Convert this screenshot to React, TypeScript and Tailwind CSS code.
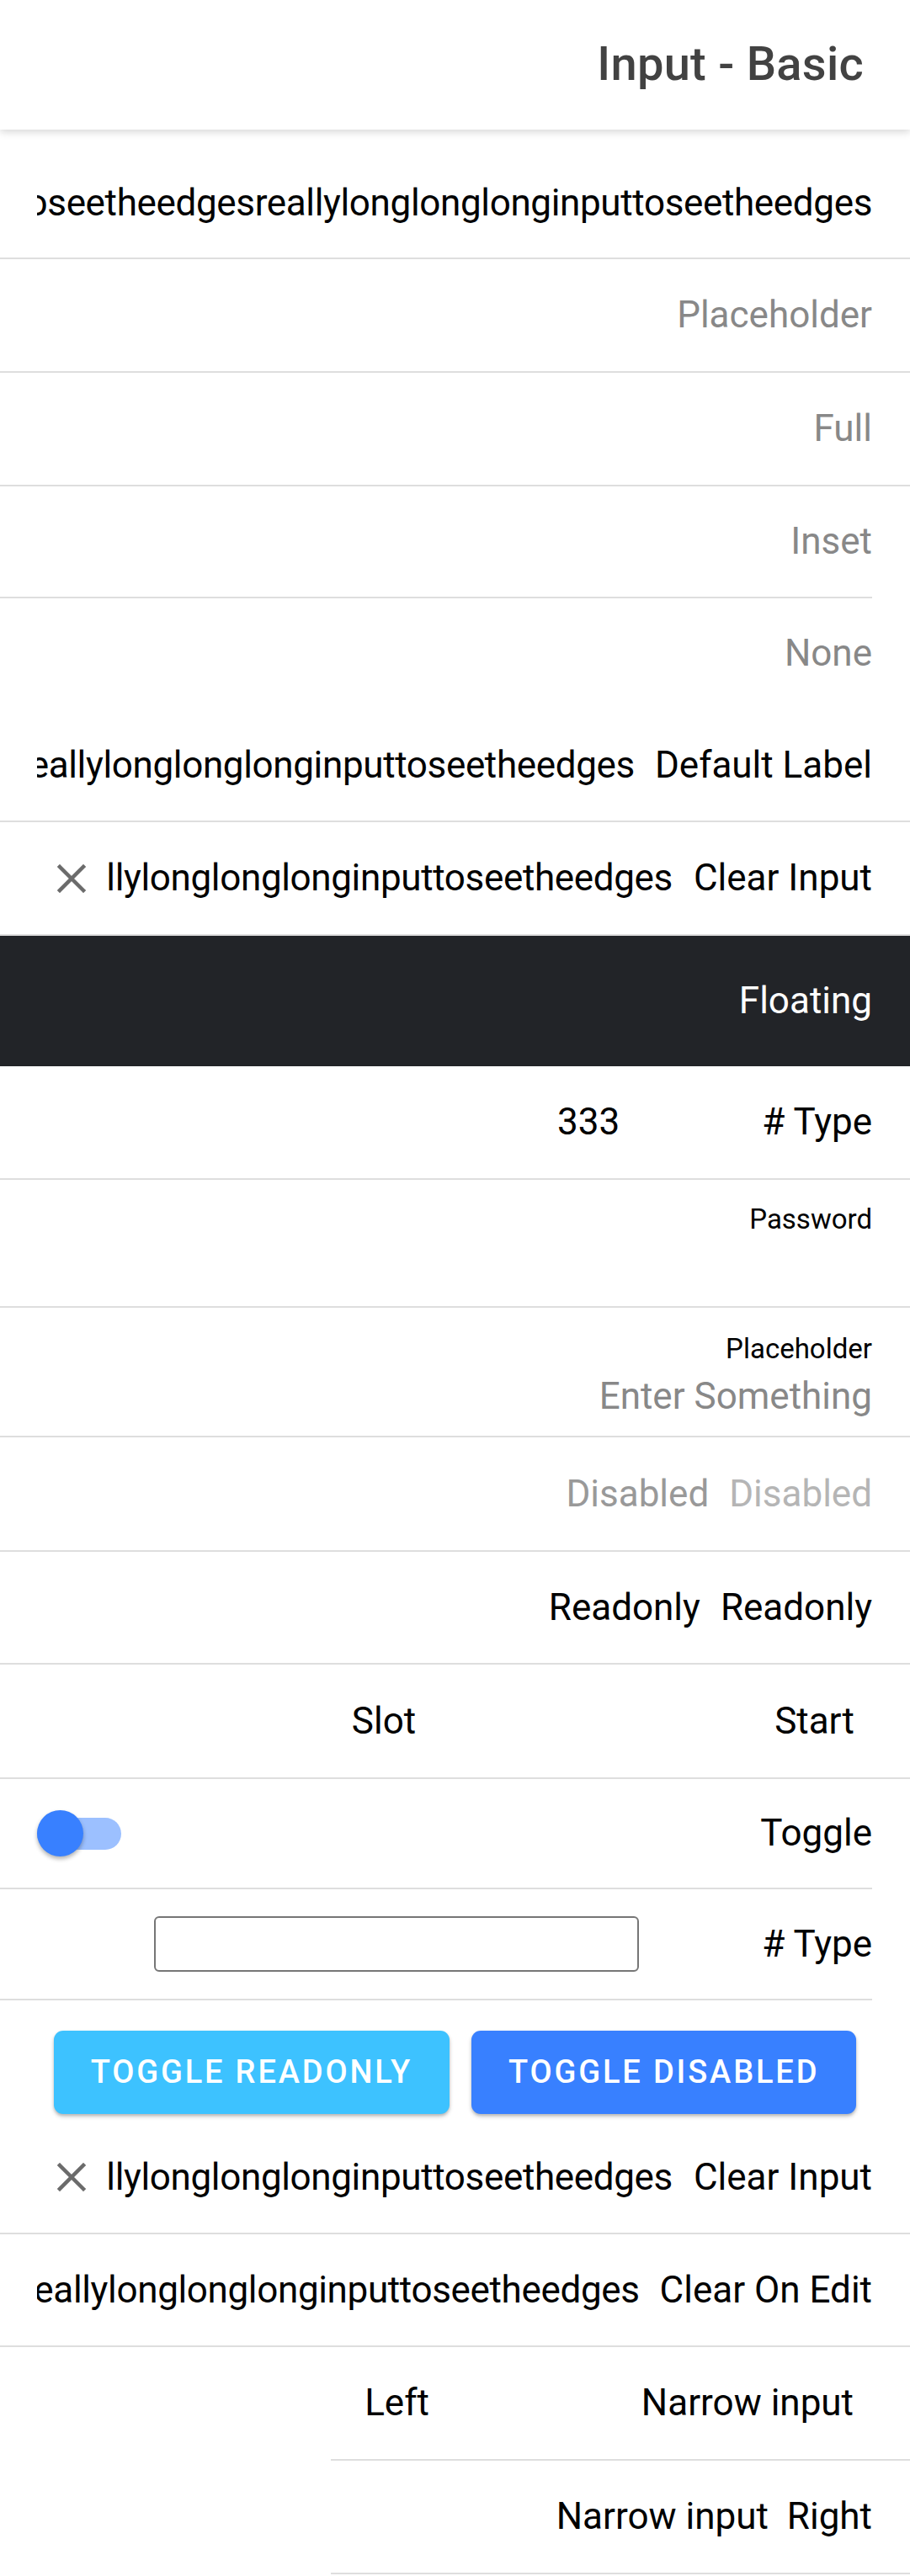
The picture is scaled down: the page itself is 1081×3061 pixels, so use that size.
import type { ReactNode } from "react";

const LONG = "reallylonglonglonginputtoseetheedgesreallylonglonglonginputtoseetheedges";
const SHORT = "reallylonglonglonginputtoseetheedges";

type Line = "full" | "inset" | "none";

function Row({
  h,
  line = "full",
  className = "",
  children,
}: {
  h: string;
  line?: Line;
  className?: string;
  children: ReactNode;
}) {
  return (
    <div className={`flex flex-col ${h}`}>
      <div className={`flex flex-1 items-center min-h-0 ${className}`}>{children}</div>
      {line === "full" && <div className="h-[2px] bg-[#dedede]" />}
      {line === "inset" && <div className="h-[2px] bg-[#dedede] mr-[45px]" />}
      {line === "none" && <div className="h-[2px]" />}
    </div>
  );
}

// text that overflows to the left, like an rtl input showing its end
function Overflow({ text, className = "" }: { text: string; className?: string }) {
  return (
    <div className={`flex flex-1 justify-end overflow-hidden min-w-0 ${className}`}>
      <span className="whitespace-nowrap shrink-0 tracking-[-0.008em]">{text}</span>
    </div>
  );
}

function ClearIcon() {
  return (
    <svg viewBox="0 0 34 34" className="w-[34px] h-[34px] shrink-0" aria-hidden="true">
      <path d="M3 3 L31 31 M31 3 L3 31" stroke="#6b6b6b" strokeWidth="4.5" strokeLinecap="square" />
    </svg>
  );
}

export default function App() {
  return (
    <div
      className="min-h-screen bg-white text-black text-[44px] leading-[1.2]"
      style={{ fontFamily: "Roboto, 'Noto Sans', 'Liberation Sans', sans-serif" }}
    >
      <header className="relative z-10 h-[154px] bg-white flex items-center justify-end pr-[55px] shadow-[0_3px_9px_rgba(0,0,0,0.16)]">
        <h1 className="text-[56px] font-medium text-[#424242] tracking-[0.005em]">Input - Basic</h1>
      </header>

      <main className="pt-[22px]">
        <Row h="h-[132px]" className="pl-[44px] pr-[45px]">
          <Overflow text={LONG} />
        </Row>
        <Row h="h-[135px]" className="justify-end pr-[45px] text-[#888]">
          Placeholder
        </Row>
        <Row h="h-[135px]" className="justify-end pr-[45px] text-[#888]">
          Full
        </Row>
        <Row h="h-[133px]" line="inset" className="justify-end pr-[45px] text-[#888]">
          Inset
        </Row>
        <Row h="h-[133px]" line="none" className="justify-end pr-[45px] text-[#888]">
          None
        </Row>
        <Row h="h-[133px]" className="pl-[44px] pr-[45px]">
          <Overflow text={SHORT} />
          <span className="ml-[24px] whitespace-nowrap">Default Label</span>
        </Row>
        <Row h="h-[135px]" className="pl-[68px] pr-[45px]">
          <ClearIcon />
          <Overflow text={SHORT} className="ml-[26px]" />
          <span className="ml-[25px] whitespace-nowrap">Clear Input</span>
        </Row>
        <div className="h-[155px] bg-[#222428] flex items-center justify-end pr-[45px] text-white">
          Floating
        </div>
        <Row h="h-[135px]" className="justify-end pr-[45px]">
          <span>333</span>
          <span className="ml-[169px]"># Type</span>
        </Row>
        <Row h="h-[152px]" className="flex-col !items-end !justify-start pr-[45px] pt-[27px]">
          <span className="text-[33px] leading-[40px]">Password</span>
        </Row>
        <Row h="h-[154px]" className="flex-col !items-end !justify-start pr-[45px] pt-[29px]">
          <span className="text-[33px] leading-[40px]">Placeholder</span>
          <span className="mt-[10px] text-[#888] leading-[53px]">Enter Something</span>
        </Row>
        <Row h="h-[136px]" className="justify-end pr-[45px]">
          <span className="text-[#999]">Disabled</span>
          <span className="ml-[24px] text-[#b5b5b5]">Disabled</span>
        </Row>
        <Row h="h-[134px]" className="justify-end pr-[45px]">
          <span>Readonly</span>
          <span className="ml-[24px]">Readonly</span>
        </Row>
        <Row h="h-[136px]" className="justify-end pr-[66px]">
          <span>Slot</span>
          <span className="ml-[426px]">Start</span>
        </Row>
        <Row h="h-[131px]" line="inset" className="pl-[44px] pr-[45px]">
          <div className="relative w-[100px] h-[55px] flex items-center shrink-0">
            <div className="w-[100px] h-[38px] rounded-full bg-[#9cc0ff]" />
            <div className="absolute left-0 top-0 w-[55px] h-[55px] rounded-full bg-[#3880ff] shadow-[0_3px_5px_rgba(0,0,0,0.3)]" />
          </div>
          <span className="ml-auto">Toggle</span>
        </Row>
        <Row h="h-[132px]" line="inset" className="justify-end pr-[45px]">
          <div className="w-[576px] h-[66px] border-2 border-[#767676] rounded-[6px]" />
          <span className="ml-[146px]"># Type</span>
        </Row>

        <div className="h-[144px] flex items-start justify-center gap-[26px] pt-[36px]">
          <button
            type="button"
            className="h-[99px] px-[44px] rounded-[11px] bg-[#3dc2ff] text-white text-[38px] font-medium tracking-[0.075em] uppercase shadow-[0_3px_5px_rgba(0,0,0,0.2),0_2px_3px_rgba(0,0,0,0.12)]"
          >
            Toggle Readonly
          </button>
          <button
            type="button"
            className="h-[99px] px-[44px] rounded-[11px] bg-[#3880ff] text-white text-[38px] font-medium tracking-[0.075em] uppercase shadow-[0_3px_5px_rgba(0,0,0,0.2),0_2px_3px_rgba(0,0,0,0.12)]"
          >
            Toggle Disabled
          </button>
        </div>

        <Row h="h-[134px]" className="pl-[68px] pr-[45px]">
          <ClearIcon />
          <Overflow text={SHORT} className="ml-[26px]" />
          <span className="ml-[25px] whitespace-nowrap">Clear Input</span>
        </Row>
        <Row h="h-[134px]" className="pl-[44px] pr-[45px]">
          <Overflow text={SHORT} />
          <span className="ml-[24px] whitespace-nowrap">Clear On Edit</span>
        </Row>
        <div className="ml-[393px]">
          <Row h="h-[135px]" className="justify-end pr-[67px]">
            <span>Left</span>
            <span className="ml-[252px]">Narrow input</span>
          </Row>
          <Row h="h-[135px]" className="justify-end pr-[45px]">
            <span>Narrow input</span>
            <span className="ml-[22px]">Right</span>
          </Row>
        </div>
      </main>
    </div>
  );
}
